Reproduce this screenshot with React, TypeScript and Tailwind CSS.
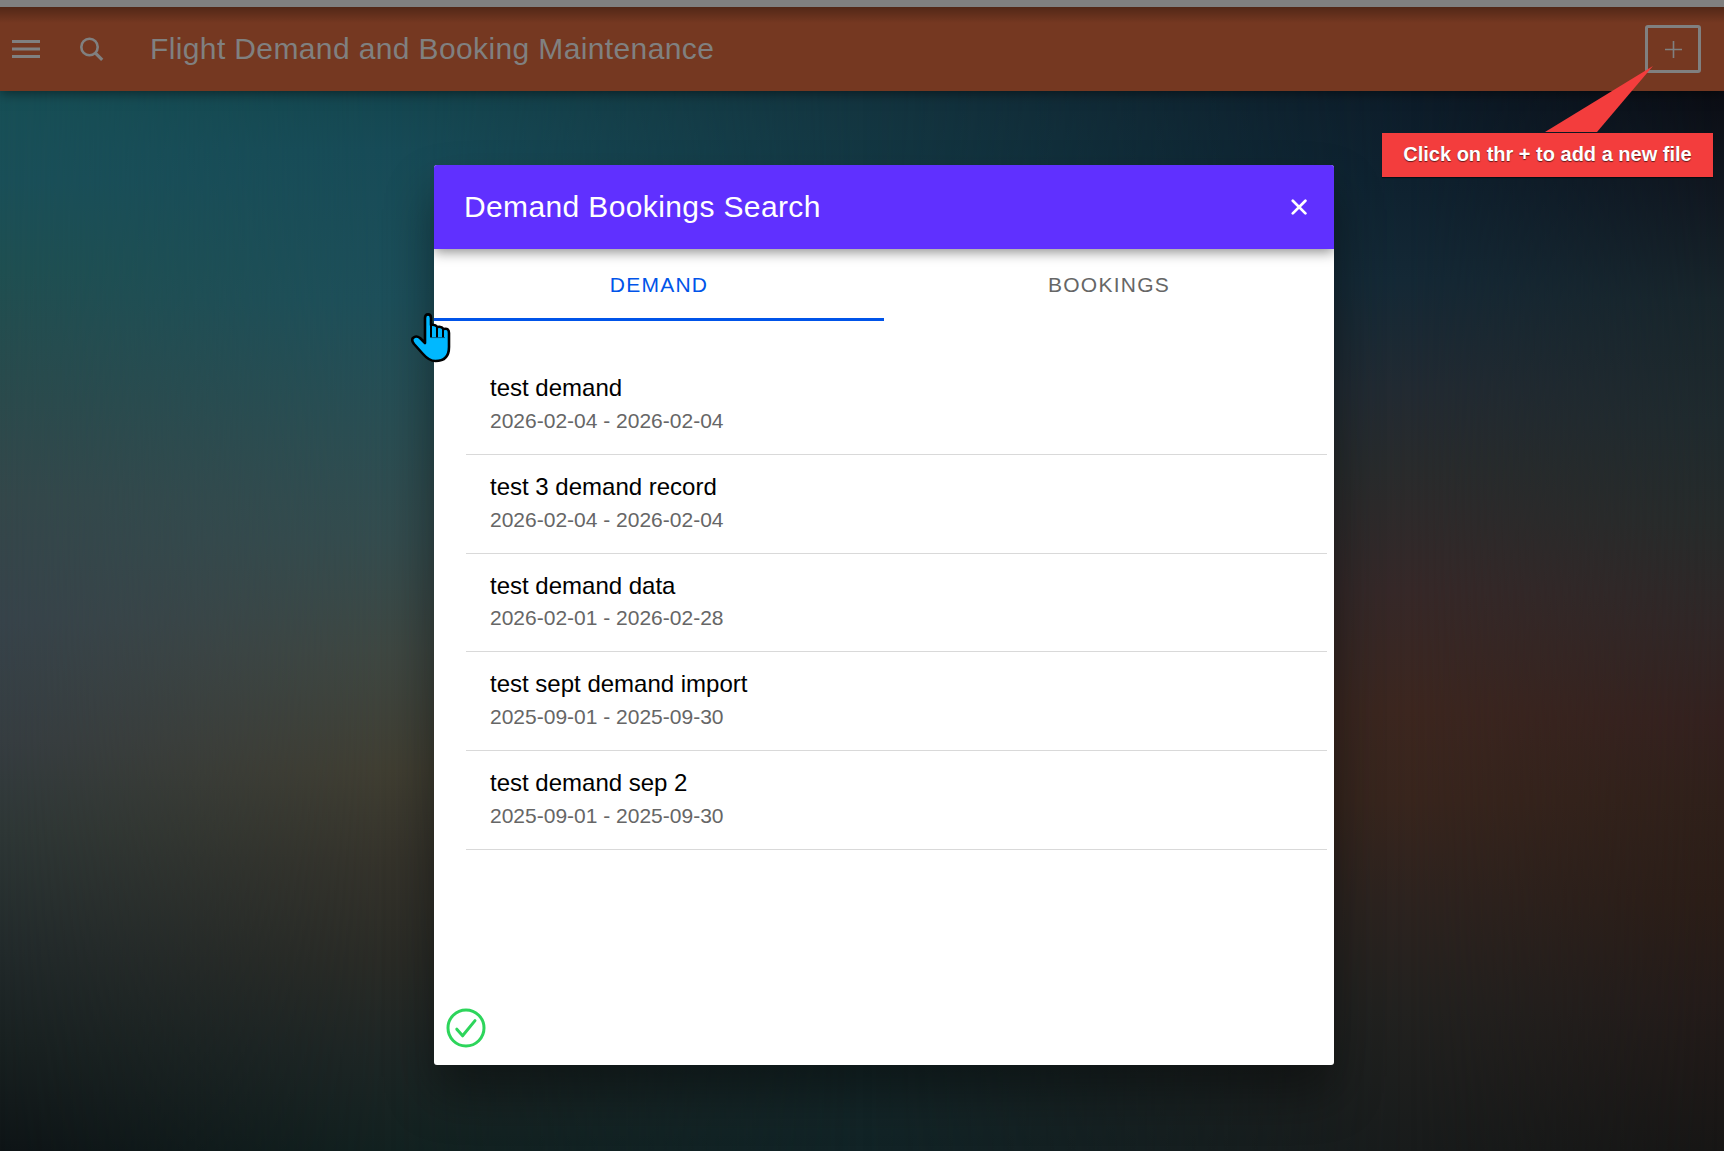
import React from "react";

const records = [
  { name: "test demand", range: "2026-02-04 - 2026-02-04" },
  { name: "test 3 demand record", range: "2026-02-04 - 2026-02-04" },
  { name: "test demand data", range: "2026-02-01 - 2026-02-28" },
  { name: "test sept demand import", range: "2025-09-01 - 2025-09-30" },
  { name: "test demand sep 2", range: "2025-09-01 - 2025-09-30" },
];

// Vertical colour ramps that blend into each other from left to right.
function Backdrop() {
  return (
    <div className="absolute inset-0">
      <div className="absolute inset-0 bg-[linear-gradient(180deg,#174f56_91px,#1a4f58_180px,#1f4f51_270px,#2b4a4c_400px,#34474a_500px,#37434a_620px,#363d41_740px,#2e3736_830px,#222a2b_950px,#182020_1050px,#0e1416_1151px)]" />
      <div className="absolute inset-0 bg-[linear-gradient(180deg,#14464f_91px,#174b57_150px,#1d4f5a_300px,#2a4e53_430px,#344c4e_540px,#3e4742_650px,#403e32_770px,#35332b_860px,#2a2b26_960px,#1e2625_1050px,#122120_1151px)] [mask-image:linear-gradient(90deg,transparent_0px,black_390px)]" />
      <div className="absolute inset-0 bg-[linear-gradient(180deg,#13343f_91px,#143a46_200px,#202f33_500px,#2a2b26_800px,#16282a_1060px,#112326_1151px)] [mask-image:linear-gradient(90deg,transparent_390px,black_862px)]" />
      <div className="absolute inset-0 bg-[linear-gradient(180deg,#0d1c29_91px,#0e212f_180px,#142835_280px,#222a32_390px,#292b2c_470px,#362828_590px,#3c261f_710px,#38251d_800px,#2d231f_900px,#22211f_1010px,#181b1b_1151px)] [mask-image:linear-gradient(90deg,transparent_862px,black_1410px)]" />
      <div className="absolute inset-0 bg-[linear-gradient(180deg,#0b0d14_91px,#111821_200px,#18252b_300px,#1f2a2e_420px,#262b2b_520px,#2f2727_620px,#33211f_720px,#2f201a_800px,#2b1d17_900px,#241b19_1000px,#171615_1151px)] [mask-image:linear-gradient(90deg,transparent_1410px,black_1724px)]" />
    </div>
  );
}

function PageHeader() {
  return (
    <header className="relative border-t-[7px] border-[#808080] bg-[#753821] shadow-[0_2px_12px_rgba(0,0,0,0.5)]">
      <div className="flex h-[84px] items-center bg-linear-to-b from-black/30 to-transparent to-[16px] pr-[23px] pl-3 text-[#808080]">
        <svg className="h-[18px] w-7" viewBox="0 0 28 18" fill="currentColor">
          <path d="M0 0h28v3H0zM0 7.5h28v3H0zM0 15h28v3H0z" />
        </svg>
        <svg className="ml-10 size-6" viewBox="0 0 24 24" fill="none" stroke="currentColor">
          <circle cx="9.5" cy="10" r="8.2" strokeWidth="2.6" />
          <path d="M15.2 15.8l7 7" strokeWidth="3.2" />
        </svg>
        <h1 className="ml-[46px] text-[30px] leading-[36px] font-normal tracking-[0.375px]">
          Flight Demand and Booking Maintenance
        </h1>
        <button className="ml-auto flex h-12 w-14 items-center justify-center rounded-[3px] border-[3px] border-[#808080]">
          <svg className="size-[17px]" viewBox="0 0 17 17" stroke="currentColor" strokeWidth="1.6">
            <path d="M8.5 0v17M0 8.5h17" />
          </svg>
        </button>
      </div>
    </header>
  );
}

function Callout() {
  return (
    <div className="absolute top-[133px] left-[1382px]">
      <svg className="absolute -top-[67px] left-[163px] h-[66px] w-[108px]" viewBox="0 0 108 66">
        <path d="M0 66L108 0L52 66z" fill="#f33d3d" />
      </svg>
      <div className="flex h-11 w-[331px] items-center justify-center bg-[#f33d3d] pb-0.5 text-[20px] font-bold whitespace-nowrap text-white shadow-[0_1px_1px_rgba(0,0,0,0.5)] [text-shadow:0_1px_1px_rgba(0,0,0,0.6)]">
        Click on thr + to add a new file
      </div>
    </div>
  );
}

function HandPointer() {
  return (
    <svg className="absolute top-[313px] left-[411px] h-[50px] w-10" viewBox="0 0 40 50">
      <path
        d="M14 28V5Q14 1.4 17 1.4Q20 1.4 20 5V12Q24 11 26.5 14Q30.5 13 32.5 16Q38 14.5 38 20V34Q38 48 24.5 48Q18 48 12 41L3 31Q0 27 2 25Q5 22 9 25L14 30z"
        fill="#00b8ff"
        stroke="#000"
        strokeWidth="2.6"
        strokeLinejoin="round"
      />
      <path d="M20 11V24.5M26 14V24.5M32 16V24.5" stroke="#000" strokeWidth="2" />
      <path d="M20 24.6H34" stroke="#004a70" strokeWidth="0.8" />
    </svg>
  );
}

function SearchDialog() {
  return (
    <section className="flex size-[900px] flex-col overflow-hidden rounded-[3px] bg-white shadow-[0_28px_48px_rgba(0,0,0,0.4)]">
      <header className="flex h-[84px] shrink-0 items-center bg-[#6030ff] pr-[27px] pl-[30px] text-white shadow-[0_3px_12px_rgba(0,0,0,0.45)]">
        <h2 className="text-[30px] leading-[36px] font-normal tracking-[0.375px]">Demand Bookings Search</h2>
        <svg className="ml-auto size-4" viewBox="0 0 16 16" stroke="currentColor" strokeWidth="2.7" strokeLinecap="round">
          <path d="M1.8 1.8l12.6 12.6M14.4 1.8L1.8 14.4" />
        </svg>
      </header>
      <nav className="grid h-[72px] shrink-0 grid-cols-2 text-center text-[21px] leading-[71px] tracking-[1.26px]">
        <span className="h-[72px] border-b-[3px] border-[#0054e9] text-[#0054e9]">DEMAND</span>
        <span className="text-[#666]">BOOKINGS</span>
      </nav>
      <ul className="mt-[35px] mr-[7px] ml-8">
        {records.map((r) => (
          <li key={r.name} className="h-[98.75px] border-b border-[#d9d9d9] pt-[17px] pl-6">
            <div className="text-[24px] leading-[30px] text-black">{r.name}</div>
            <div className="mt-[2.8px] text-[21px] leading-[30px] text-[#666]">{r.range}</div>
          </li>
        ))}
      </ul>
      <svg className="mt-auto mb-[17px] ml-3 size-10" viewBox="0 0 40 40" fill="none" stroke="#2dd55b" strokeWidth="3">
        <circle cx="20" cy="20" r="18" />
        <path d="M10.8 21.2l5.8 6.6L29 12.6" strokeLinecap="round" strokeLinejoin="round" />
      </svg>
    </section>
  );
}

export default function App() {
  return (
    <div className="relative h-[1151px] w-[1724px] overflow-hidden bg-[#182528] font-['Liberation_Sans',Arial,sans-serif]">
      <Backdrop />
      <PageHeader />
      <main className="absolute inset-0 flex items-center justify-center pt-[79px] pl-11">
        <SearchDialog />
      </main>
      <Callout />
      <HandPointer />
    </div>
  );
}
